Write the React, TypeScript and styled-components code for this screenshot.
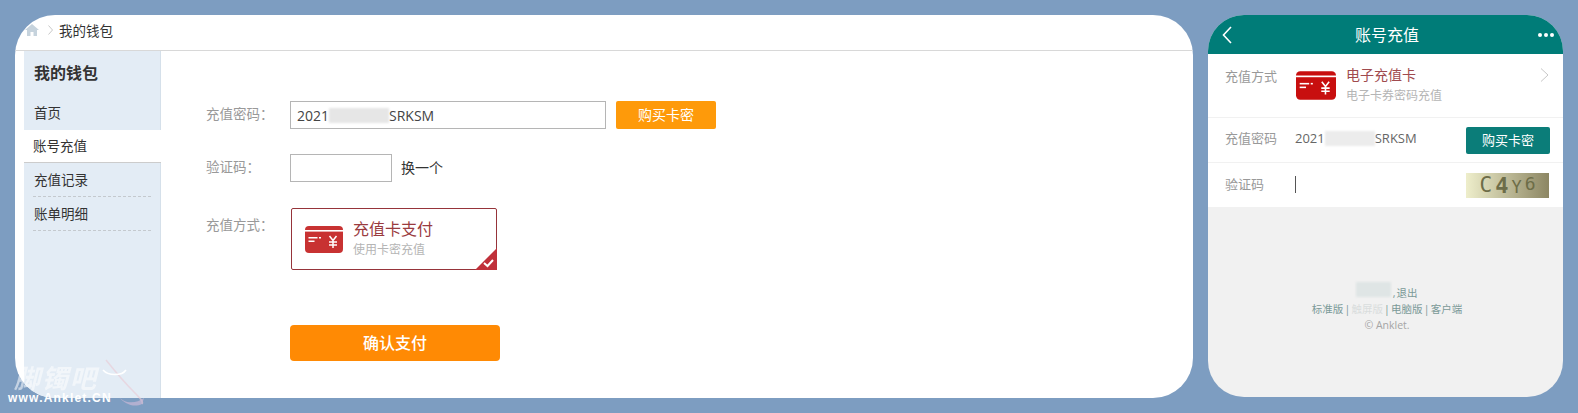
import styled, { createGlobalStyle } from 'styled-components';

const FONT = '"Open Sans", "Noto Sans CJK SC", sans-serif';

const GlobalStyle = createGlobalStyle`
  html, body {
    margin: 0;
    padding: 0;
    background: #7d9dc1;
  }
  body {
    font-family: ${FONT};
  }
`;

const Page = styled.div`
  position: relative;
  display: flex;
  gap: 15px;
  width: 1578px;
  height: 413px;
  padding: 15px;
  box-sizing: border-box;
  overflow: hidden;
  background: #7d9dc1;
`;

const MainPanel = styled.div`
  display: flex;
  flex-direction: column;
  width: 1178px;
  height: 383px;
  padding-left: 9px;
  box-sizing: border-box;
  background: #fff;
  border-radius: 40px;
  overflow: hidden;
`;

const Breadcrumb = styled.div`
  display: flex;
  align-items: center;
  flex: 0 0 36px;
  margin-left: -9px;
  padding: 0 0 5px 10px;
  box-sizing: border-box;
  border-bottom: 1px solid #d8d8d8;
  font-size: 13.5px;
  color: #333;
`;

const Crumb = styled.span`
  margin-left: 6px;
`;

const CrumbArrow = styled.svg`
  margin-left: 9px;
`;

const MainBody = styled.div`
  display: flex;
  flex: 1;
  min-height: 0;
`;

const Sidebar = styled.div`
  width: 137px;
  flex: none;
  background: #e3ecf5;
  border-right: 1px solid #d5e0ea;
  box-sizing: border-box;
`;

const SideTitle = styled.div`
  height: 45px;
  padding-left: 10px;
  line-height: 44px;
  font-size: 16px;
  font-weight: 700;
  color: #333;
`;

const SideItem = styled.div<{ $active?: boolean; $dashed?: boolean }>`
  height: ${(p) => (p.$active ? 33 : 34)}px;
  line-height: ${(p) => (p.$active ? 33 : 35)}px;
  padding-left: ${(p) => (p.$active ? 9 : 10)}px;
  margin-right: ${(p) => (p.$active ? -1 : 0)}px;
  box-sizing: border-box;
  font-size: 13.5px;
  color: #333;
  background: ${(p) => (p.$active ? '#fff' : 'transparent')};
  border-bottom: ${(p) => (p.$active ? '1px solid #ccc' : 'none')};
  position: relative;

  ${(p) =>
    p.$dashed &&
    `
    &::after {
      content: '';
      position: absolute;
      left: 9px;
      right: 9px;
      bottom: 0;
      border-bottom: 1px dashed #c4c9ce;
    }
  `}
`;

const Form = styled.div`
  display: flex;
  flex-direction: column;
  padding: 50px 0 0 45px;
`;

const FormRow = styled.div<{ $mb: number }>`
  display: flex;
  align-items: flex-start;
  margin-bottom: ${(p) => p.$mb}px;
`;

const FormLabel = styled.div<{ $h?: number }>`
  width: 84px;
  flex: none;
  line-height: ${(p) => p.$h ?? 27}px;
  font-size: 13.5px;
  color: #999;
`;

const TextBox = styled.div<{ $w: number }>`
  display: flex;
  align-items: center;
  width: ${(p) => p.$w}px;
  height: 28px;
  padding-left: 6px;
  box-sizing: border-box;
  border: 1px solid #b5b5b5;
  font-size: 14px;
  color: #444;
`;

const Masked = styled.span<{ $w: number; $tone?: string }>`
  display: inline-block;
  width: ${(p) => p.$w}px;
  height: 15px;
  background: ${(p) => p.$tone ?? '#e6e6e6'};
  filter: blur(1px);
`;

const OrangeButton = styled.div`
  width: 100px;
  height: 28px;
  margin-left: 10px;
  line-height: 28px;
  text-align: center;
  font-size: 14px;
  color: #fff;
  background: #fe9a0a;
  border-radius: 2px;
`;

const SwapLink = styled.span`
  margin-left: 9px;
  line-height: 27px;
  font-size: 14px;
  color: #333;
`;

const PayCard = styled.div`
  position: relative;
  display: flex;
  align-items: center;
  gap: 10px;
  width: 206px;
  height: 62px;
  margin-left: 1px;
  padding-left: 13px;
  box-sizing: border-box;
  border: 1px solid #96343a;
  border-radius: 2px;
`;

const PayText = styled.div`
  display: flex;
  flex-direction: column;
`;

const PayTitle = styled.div<{ $size: number; $color: string }>`
  font-size: ${(p) => p.$size}px;
  line-height: 20px;
  color: ${(p) => p.$color};
`;

const PaySub = styled.div`
  margin-top: 2px;
  font-size: 12px;
  line-height: 18px;
  color: #b5b5b5;
`;

const CheckBadge = styled.svg`
  position: absolute;
  right: -1px;
  bottom: -1px;
`;

const ConfirmButton = styled.div`
  width: 210px;
  height: 36px;
  line-height: 36px;
  margin-left: 84px;
  text-align: center;
  font-size: 16px;
  font-weight: 500;
  color: #fff;
  background: #ff8a04;
  border-radius: 4px;
`;

const Phone = styled.div`
  display: flex;
  flex-direction: column;
  width: 355px;
  height: 382px;
  background: #f1f1f1;
  border-radius: 36px;
  overflow: hidden;
`;

const PhoneHeader = styled.div`
  display: flex;
  align-items: center;
  justify-content: space-between;
  flex: 0 0 39px;
  padding: 0 9px 0 14px;
  background: #007c78;
  color: #fff;
`;

const PhoneTitle = styled.div`
  margin-left: 4px;
  padding-bottom: 2px;
  font-size: 16px;
`;

const Dots = styled.div`
  display: flex;
  gap: 2px;
`;

const Dot = styled.span`
  width: 4px;
  height: 4px;
  border-radius: 50%;
  background: #fff;
`;

const PhoneRow = styled.div<{ $h: number }>`
  display: flex;
  align-items: center;
  height: ${(p) => p.$h}px;
  padding: 0 13px 0 17px;
  box-sizing: border-box;
  background: #fff;
  border-bottom: 1px solid #f1f1f1;
`;

const PhoneLabel = styled.div<{ $top?: boolean; $lift?: number }>`
  width: 70px;
  flex: none;
  font-size: 13px;
  color: #999;
  align-self: ${(p) => (p.$top ? 'flex-start' : 'center')};
  padding-top: ${(p) => (p.$top ? 12 : 0)}px;
  margin-bottom: ${(p) => p.$lift ?? 0}px;
`;

const PhoneValue = styled.div<{ $gap?: number; $lift?: number }>`
  display: flex;
  align-items: center;
  flex: 1;
  gap: ${(p) => p.$gap ?? 0}px;
  margin-bottom: ${(p) => p.$lift ?? 0}px;
  font-size: 13px;
  color: #666;
`;

const IconSlot = styled.div`
  display: flex;
  margin-left: 1px;
`;

const RowArrow = styled.svg`
  margin: -22px 1px 0 0;
`;

const TealButton = styled.div`
  width: 84px;
  height: 27px;
  line-height: 27px;
  text-align: center;
  font-size: 13px;
  color: #fff;
  background: #0b7d79;
  border-radius: 2px;
`;

const Caret = styled.span`
  width: 1px;
  height: 17px;
  background: #555;
`;

const Captcha = styled.div`
  display: flex;
  align-items: flex-start;
  justify-content: center;
  gap: 3px;
  width: 83px;
  height: 25px;
  margin-right: 1px;
  font-family: "DejaVu Sans Mono", monospace;
  color: #6d6d48;
  background: linear-gradient(90deg, #eeeecb, #8c8663);
`;

const CaptchaChar = styled.span<{ $size: number; $lh: number; $top: number; $weight?: number }>`
  font-size: ${(p) => p.$size}px;
  line-height: ${(p) => p.$lh}px;
  font-weight: ${(p) => p.$weight ?? 400};
  margin-top: ${(p) => p.$top}px;
`;

const PhoneFooter = styled.div`
  padding: 74px 0 0 3px;
  text-align: center;
  font-size: 10.5px;
  line-height: 16px;
  word-spacing: -1.5px;
  color: #7b9a98;
`;

const Faded = styled.span`
  color: #d9dddd;
`;

const Copy = styled.div`
  word-spacing: 0;
  color: #a5a5a5;
`;

const Watermark = styled.div`
  position: absolute;
  left: 8px;
  top: 364px;
  color: #fff;
  pointer-events: none;
`;

const MarkTitle = styled.div`
  padding-left: 6px;
  font-size: 26px;
  line-height: 28px;
  font-weight: 700;
  font-style: italic;
  letter-spacing: 2px;
  opacity: 0.55;
`;

const MarkUrl = styled.div`
  font-family: "Liberation Sans", sans-serif;
  font-size: 12px;
  line-height: 12px;
  font-weight: 700;
  letter-spacing: 1.2px;
  white-space: nowrap;
`;

const Shoe = styled.svg`
  position: absolute;
  left: 92px;
  top: -6px;
`;

const HomeIcon = () => (
  <svg width="14" height="12" viewBox="0 0 14 12">
    <path d="M7 0 L14 6 H12 V12 H8.5 V8 H5.5 V12 H2 V6 H0 Z" fill="#c6d3dd" />
  </svg>
);

const SmallChevron = () => (
  <CrumbArrow width="5" height="10" viewBox="0 0 5 10">
    <path d="M0.5 0.5 L4.5 5 L0.5 9.5" fill="none" stroke="#c8c8c8" />
  </CrumbArrow>
);

const CardIcon = ({ color, w, h }: { color: string; w: number; h: number }) => (
  <svg width={w} height={h} viewBox="0 0 38 28">
    <path d="M0 5 a4 4 0 0 1 4 -4 H34 a4 4 0 0 1 4 4 V24 a4 4 0 0 1 -4 4 H4 a4 4 0 0 1 -4 -4 Z" fill={color} />
    <rect x="0" y="5" width="38" height="1.6" fill="#fff" />
    <rect x="3.5" y="12" width="9" height="1.5" fill="#fff" />
    <rect x="3.5" y="15.5" width="6" height="1.5" fill="#fff" />
    <rect x="14" y="12" width="2" height="1.5" fill="#fff" />
    <path d="M24.5 11 L28 15.5 L31.5 11 M28 15.5 V23 M24 17 H32 M24 20 H32" fill="none" stroke="#fff" strokeWidth="1.5" />
  </svg>
);

export default function App() {
  return (
    <Page>
      <GlobalStyle />
      <MainPanel>
        <Breadcrumb>
          <HomeIcon />
          <SmallChevron />
          <Crumb>我的钱包</Crumb>
        </Breadcrumb>
        <MainBody>
          <Sidebar>
            <SideTitle>我的钱包</SideTitle>
            <SideItem>首页</SideItem>
            <SideItem $active>账号充值</SideItem>
            <SideItem $dashed>充值记录</SideItem>
            <SideItem $dashed>账单明细</SideItem>
          </Sidebar>
          <Form>
            <FormRow $mb={25}>
              <FormLabel>充值密码：</FormLabel>
              <TextBox $w={316}>
                2021
                <Masked $w={60} />
                SRKSM
              </TextBox>
              <OrangeButton>购买卡密</OrangeButton>
            </FormRow>
            <FormRow $mb={26}>
              <FormLabel>验证码：</FormLabel>
              <TextBox $w={102} />
              <SwapLink>换一个</SwapLink>
            </FormRow>
            <FormRow $mb={55}>
              <FormLabel $h={34}>充值方式：</FormLabel>
              <PayCard>
                <CardIcon color="#c83232" w={38} h={28} />
                <PayText>
                  <PayTitle $size={16} $color="#9a3b3f">充值卡支付</PayTitle>
                  <PaySub>使用卡密充值</PaySub>
                </PayText>
                <CheckBadge width="22" height="22" viewBox="0 0 22 22">
                  <path d="M22 0 V22 H0 Z" fill="#c0303a" />
                  <path d="M9 15 L12.5 18 L18 12" fill="none" stroke="#fff" strokeWidth="2" />
                </CheckBadge>
              </PayCard>
            </FormRow>
            <ConfirmButton>确认支付</ConfirmButton>
          </Form>
        </MainBody>
      </MainPanel>

      <Phone>
        <PhoneHeader>
          <svg width="10" height="18" viewBox="0 0 10 18">
            <path d="M9 1 L1.5 9 L9 17" fill="none" stroke="#fff" strokeWidth="1.6" />
          </svg>
          <PhoneTitle>账号充值</PhoneTitle>
          <Dots>
            <Dot />
            <Dot />
            <Dot />
          </Dots>
        </PhoneHeader>
        <PhoneRow $h={64}>
          <PhoneLabel $top>充值方式</PhoneLabel>
          <PhoneValue $gap={10} $lift={2}>
            <IconSlot>
              <CardIcon color="#c80f0f" w={40} h={30} />
            </IconSlot>
            <PayText>
              <PayTitle $size={14} $color="#a04a4e">电子充值卡</PayTitle>
              <PaySub>电子卡券密码充值</PaySub>
            </PayText>
          </PhoneValue>
          <RowArrow width="9" height="14" viewBox="0 0 9 14">
            <path d="M1 0.5 L8 7 L1 13.5" fill="none" stroke="#c8c8c8" />
          </RowArrow>
        </PhoneRow>
        <PhoneRow $h={45}>
          <PhoneLabel $lift={6}>充值密码</PhoneLabel>
          <PhoneValue $lift={4}>
            2021
            <Masked $w={50} $tone="#ececec" />
            SRKSM
          </PhoneValue>
          <TealButton>购买卡密</TealButton>
        </PhoneRow>
        <PhoneRow $h={45}>
          <PhoneLabel $lift={4}>验证码</PhoneLabel>
          <PhoneValue $lift={2}>
            <Caret />
          </PhoneValue>
          <Captcha>
            <CaptchaChar $size={21} $lh={23} $top={1}>C</CaptchaChar>
            <CaptchaChar $size={22} $lh={24} $top={1} $weight={700}>4</CaptchaChar>
            <CaptchaChar $size={17} $lh={19} $top={5}>Y</CaptchaChar>
            <CaptchaChar $size={18} $lh={20} $top={1}>6</CaptchaChar>
          </Captcha>
        </PhoneRow>
        <PhoneFooter>
          <div>
            <Masked $w={35} $tone="#dfe5e5" /> , 退出
          </div>
          <div>
            标准版 | <Faded>触屏版</Faded> | 电脑版 | 客户端
          </div>
          <Copy>© Anklet.</Copy>
        </PhoneFooter>
      </Phone>

      <Watermark>
        <MarkTitle>脚镯吧</MarkTitle>
        <MarkUrl>www.Anklet.CN</MarkUrl>
        <Shoe width="56" height="50" viewBox="0 0 56 50">
          <path d="M6 2 C14 12 24 24 34 34 C40 40 44 44 42 46" fill="none" stroke="#e9c9d3" strokeWidth="1.5" opacity="0.6" />
          <path d="M3 12 C8 18 22 18 26 12" fill="none" stroke="#fff" strokeWidth="1.5" />
          <path d="M18 38 C24 46 36 46 44 40 L42 46 C34 50 24 46 18 38 Z" fill="#c9b8d6" opacity="0.7" />
        </Shoe>
      </Watermark>
    </Page>
  );
}
